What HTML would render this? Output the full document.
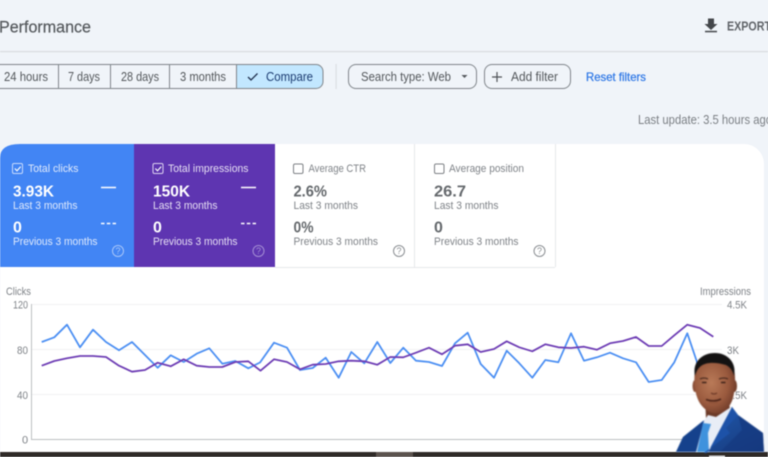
<!DOCTYPE html>
<html><head><meta charset="utf-8"><style>
html,body{margin:0;padding:0;background:#f0f4f9;width:768px;height:457px;overflow:hidden}
svg{display:block;font-family:"Liberation Sans",sans-serif}
</style></head><body>
<svg width="768" height="457" viewBox="0 0 768 457" xmlns="http://www.w3.org/2000/svg">
<defs>
<linearGradient id="jk" x1="0" y1="0" x2="1" y2="1"><stop offset="0" stop-color="#2260b8"/><stop offset="1" stop-color="#16387a"/></linearGradient>
<radialGradient id="fc" cx="0.42" cy="0.42" r="0.68"><stop offset="0" stop-color="#b97a58"/><stop offset=".6" stop-color="#9a5a3e"/><stop offset="1" stop-color="#6a3726"/></radialGradient>
</defs>
<rect width="768" height="457" fill="#f0f4f9"/>
<g style="filter:blur(.45px)">
<text x="-1" y="32.500" font-size="16.500" fill="#54585c" stroke="#54585c" stroke-width=".2" textLength="92" lengthAdjust="spacingAndGlyphs">Performance</text>
<rect x="0" y="51" width="768" height="1.200" fill="#d9dbde"/>
<path d="M708 18.500h6v5.500h3.500l-6.500 6-6.500-6h3.500z" fill="#44474b"/>
<rect x="705" y="30.800" width="12" height="1.500" fill="#44474b"/>
<text x="727" y="30.500" font-size="12.500" font-weight="bold" fill="#5f6368" textLength="44" lengthAdjust="spacingAndGlyphs">EXPORT</text>

<!-- segments -->
<path d="M236.500 64.500H316a7 7 0 0 1 7 7V81.500a7 7 0 0 1-7 7H236.500z" fill="#c2e7ff"/>
<path d="M-10 64.500H316a7 7 0 0 1 7 7V81.500a7 7 0 0 1-7 7H-10z" fill="none" stroke="#80868b" stroke-width="1"/>
<path d="M58.500 64.500v24M110.500 64.500v24M169.500 64.500v24M236.500 64.500v24" stroke="#80868b" stroke-width="1"/>
<g font-size="12.500" fill="#54585c">
<text x="4" y="81" textLength="44" lengthAdjust="spacingAndGlyphs">24 hours</text>
<text x="68" y="81" textLength="32" lengthAdjust="spacingAndGlyphs">7 days</text>
<text x="121" y="81" textLength="38" lengthAdjust="spacingAndGlyphs">28 days</text>
<text x="180" y="81" textLength="46" lengthAdjust="spacingAndGlyphs">3 months</text>
<text x="266" y="81" fill="#1c3c72" textLength="47" lengthAdjust="spacingAndGlyphs">Compare</text>
</g>
<path d="M248 77l3 3 6.500-6.500" fill="none" stroke="#1f2f4d" stroke-width="1.300"/>
<rect x="335.500" y="64" width="1.200" height="25" fill="#dcdfe3"/>
<rect x="348.500" y="64.500" width="128" height="24" rx="7.500" fill="none" stroke="#80868b"/>
<text x="361" y="81" font-size="12.500" fill="#54585c" textLength="90" lengthAdjust="spacingAndGlyphs">Search type: Web</text>
<path d="M461.500 75h6l-3 3z" fill="#54585c"/>
<rect x="484.500" y="64.500" width="86" height="24" rx="7.500" fill="none" stroke="#80868b"/>
<path d="M497 72v10M492 77h10" stroke="#4f5357" stroke-width="1.200"/>
<text x="511" y="81" font-size="12.500" fill="#54585c" textLength="47" lengthAdjust="spacingAndGlyphs">Add filter</text>
<text x="586" y="81" font-size="12" fill="#2f78e6" stroke="#2f78e6" stroke-width=".25" textLength="60" lengthAdjust="spacingAndGlyphs">Reset filters</text>
<text x="638" y="124" font-size="12.500" fill="#7c8085" textLength="134" lengthAdjust="spacingAndGlyphs">Last update: 3.5 hours ago</text>

<!-- card -->
<path d="M0 452V164a20 20 0 0 1 20-20H744a20 20 0 0 1 20 20V452z" fill="#fff"/>
<path d="M0 267V158Q0 144 20 144H134V267z" fill="#4285f4"/>
<rect x="134" y="144" width="141" height="123" fill="#5e35b1"/>
<rect x="275" y="267" width="280" height="1" fill="#e6e8eb"/>
<rect x="414" y="144" width="1" height="123" fill="#e6e8eb"/>
<rect x="555" y="144" width="1" height="123" fill="#e6e8eb"/>

<!-- checks -->
<g fill="none" stroke-width="1">
<rect x="12.500" y="163.500" width="10" height="10" rx="1.500" stroke="#c8dafc"/>
<path d="M14.800 168.500l2.200 2.300 3.700-4.200" stroke="#fff" stroke-width="1.100"/>
<rect x="153" y="163.500" width="10" height="10" rx="1.500" stroke="#ddd2f0"/>
<path d="M155.300 168.500l2.200 2.300 3.700-4.200" stroke="#fff" stroke-width="1.100"/>
<rect x="293.500" y="164" width="9.500" height="9.500" rx="1.500" stroke="#7d8185"/>
<rect x="434.500" y="164" width="9.500" height="9.500" rx="1.500" stroke="#7d8185"/>
</g>
<g font-size="11">
<g fill="#e0eafc">
<text x="28" y="172" textLength="50.500" lengthAdjust="spacingAndGlyphs">Total clicks</text>
<text x="13" y="209" textLength="64.500" lengthAdjust="spacingAndGlyphs">Last 3 months</text>
<text x="13" y="245" textLength="84.500" lengthAdjust="spacingAndGlyphs">Previous 3 months</text>
</g>
<g fill="#e6dff3">
<text x="168" y="172" textLength="80.500" lengthAdjust="spacingAndGlyphs">Total impressions</text>
<text x="153" y="209" textLength="64.500" lengthAdjust="spacingAndGlyphs">Last 3 months</text>
<text x="153" y="245" textLength="84.500" lengthAdjust="spacingAndGlyphs">Previous 3 months</text>
</g>
<g fill="#7f8388">
<text x="308.500" y="172" textLength="57.500" lengthAdjust="spacingAndGlyphs">Average CTR</text>
<text x="293.500" y="209" textLength="64.500" lengthAdjust="spacingAndGlyphs">Last 3 months</text>
<text x="293.500" y="245" textLength="84.500" lengthAdjust="spacingAndGlyphs">Previous 3 months</text>
<text x="449" y="172" textLength="75" lengthAdjust="spacingAndGlyphs">Average position</text>
<text x="434" y="209" textLength="64.500" lengthAdjust="spacingAndGlyphs">Last 3 months</text>
<text x="434" y="245" textLength="84.500" lengthAdjust="spacingAndGlyphs">Previous 3 months</text>
</g>
</g>
<g font-size="16" font-weight="bold">
<g fill="#fff">
<text x="13" y="196.500" textLength="41" lengthAdjust="spacingAndGlyphs">3.93K</text>
<text x="13" y="232.500">0</text>
<text x="153" y="196.500" textLength="37" lengthAdjust="spacingAndGlyphs">150K</text>
<text x="153" y="232.500">0</text>
</g>
<g fill="#65696d">
<text x="293.500" y="196.500" textLength="33.500" lengthAdjust="spacingAndGlyphs">2.6%</text>
<text x="293.500" y="232.500" textLength="20" lengthAdjust="spacingAndGlyphs">0%</text>
<text x="434" y="196.500" textLength="32" lengthAdjust="spacingAndGlyphs">26.7</text>
<text x="434" y="232.500">0</text>
</g>
</g>
<path d="M101 187.500h15M241 187.500h15" stroke="#fff" stroke-width="1.400"/>
<path d="M101 223.500h15M241 223.500h15" stroke="#fff" stroke-width="1.400" stroke-dasharray="3.500 2.300"/>
<g fill="none" stroke-width="1" font-size="9" text-anchor="middle">
<circle cx="118" cy="251" r="5.500" stroke="#a8c6f9"/><text x="118" y="254.200" fill="#a8c6f9" stroke="none">?</text>
<circle cx="258.500" cy="251" r="5.500" stroke="#a48ed4"/><text x="258.500" y="254.200" fill="#a48ed4" stroke="none">?</text>
<circle cx="399" cy="251" r="5.500" stroke="#8b8f93"/><text x="399" y="254.200" fill="#8b8f93" stroke="none">?</text>
<circle cx="539.500" cy="251" r="5.500" stroke="#8b8f93"/><text x="539.500" y="254.200" fill="#8b8f93" stroke="none">?</text>
</g>

<!-- chart -->
<path d="M31 304.500H722M31 349.500H722M31 394.500H722" stroke="#f1f2f3" stroke-width="1"/>
<path d="M31.500 304V439.500H722" fill="none" stroke="#bdbfc2" stroke-width="1"/>
<g font-size="11" fill="#7f8388">
<text x="6" y="295" textLength="25" lengthAdjust="spacingAndGlyphs">Clicks</text>
<text x="13" y="308.500" textLength="15" lengthAdjust="spacingAndGlyphs">120</text>
<text x="17" y="354" textLength="11" lengthAdjust="spacingAndGlyphs">80</text>
<text x="17" y="399" textLength="11" lengthAdjust="spacingAndGlyphs">40</text>
<text x="22" y="443.500">0</text>
<text x="700" y="295" textLength="51" lengthAdjust="spacingAndGlyphs">Impressions</text>
<text x="727" y="308.500" textLength="20" lengthAdjust="spacingAndGlyphs">4.5K</text>
<text x="727" y="354" textLength="12" lengthAdjust="spacingAndGlyphs">3K</text>
<text x="727" y="399" textLength="20" lengthAdjust="spacingAndGlyphs">1.5K</text>
</g>
<polyline fill="none" stroke="#4d90f3" stroke-width="1.800" stroke-linejoin="round" points="41.700,342 54.300,337.300 67,324.700 80,347.300 93,329.700 106,342 119,350.300 132,342 145,355 157.700,367.700 170.700,355.300 183.700,362 196.700,353.700 209.300,348.300 222.300,363.700 235.300,361 248.300,368.300 260,362.500 274,342.700 287,347.700 300,370 312.700,368 325.700,357.700 338.700,377.700 351.300,352 364.300,363.300 377.300,342 390.300,363 403.300,347.700 416,360.700 429,362 442,366 455,343.300 467.700,332.700 480.700,364 494,377.700 506.700,350.700 519.300,363.300 532.300,377.700 545.300,360 558.300,362.300 571,333.300 584,360.700 597,357.300 610,352.700 623,358.300 636,362.300 648.700,382 661.700,380 674.300,362.300 687.300,333.300 697,362 705,380"/>
<polyline fill="none" stroke="#6f3fb5" stroke-width="1.800" stroke-linejoin="round" points="41.700,365.700 54.300,361 67,358.300 80,356 93,356 106,357 119,365.700 132,371.700 145,370 157.700,362.700 170.700,366.300 183.700,359.300 196.700,365.700 209.300,367 222.300,367 235.300,362 248.300,361.300 260.500,370.700 274,359.300 287,362 300,369.300 312.700,364.700 325.700,364 338.700,361.300 351.300,360.700 364.300,361.300 377.300,364.700 390.300,357 403.300,357.300 416,352.700 429,347.700 442,354.300 455,345.700 467.700,344.300 480.700,352 494,349 506.700,341.300 519.300,347.300 532.300,351.300 545.300,344.300 558.300,347.300 571,348 584,346.700 597,349.700 610,343.300 623,341 636,337 648.700,346 661.700,346 674.300,335.300 687.300,324.700 700,328 713.300,336.700"/>

<!-- bottom strip -->
<rect x="0" y="452" width="768" height="5" fill="#2f2a27"/>
<rect x="376" y="452" width="37" height="5" fill="#5b534e"/>
<rect x="709" y="455.500" width="16" height="1.500" fill="#d8d8d8"/>
</g>

<!-- person -->
<g style="filter:blur(.7px)">
<!-- jacket -->
<path d="M676 452 683 437 703 421 732 407 738 415 763 433 764 452z" fill="url(#jk)"/>
<path d="M676 452 683 437 703 421 698 452z" fill="#15418c"/>
<!-- neck -->
<path d="M705 398 706 418 716 424 730 412 729 398z" fill="#6b3a28"/>
<!-- shirt -->
<path d="M704 421 708 415 716 417 731 407 734 411 727 424 708 452H696z" fill="#e8edf6"/>
<!-- tie -->
<path d="M703 423 711 424 708 433 709 452H697L701 433z" fill="#3f92dd"/>
<!-- lapel -->
<path d="M732 407 738 415 726 428 730 433 704 453H706L708 452z" fill="#1d52a8"/>
<path d="M738 415 763 433 764 452H720L742 430z" fill="#153a80" opacity=".75"/>
<!-- ears -->
<ellipse cx="695" cy="386" rx="2.500" ry="6" fill="#8a4e36"/>
<ellipse cx="734.500" cy="386" rx="2.500" ry="6" fill="#74412c"/>
<!-- face -->
<path d="M695 370C693 386 696 399 702 406 708 413 714 414 719 413 726 412 731 405 733 398 735 390 736 380 734 368 729 358 701 358 695 370z" fill="url(#fc)"/>
<!-- hair -->
<path d="M695 376C692 362 702 353 715 353 727 353 737 362 734 376 733 371 730 367 726 365 716 362 706 362 701 366 698 368 696 372 695 376z" fill="#141212"/>
<!-- features -->
<path d="M700 379q4-2 8 0M719 379q5-2 9 0" fill="none" stroke="#3a2018" stroke-width="1.100"/>
<path d="M702 382.500h4.500M721 382.500h4.500" stroke="#2b1610" stroke-width="1.200"/>
<path d="M711 393q3 2 6 0" fill="none" stroke="#6b3826" stroke-width="1.300"/>
<path d="M706 399.500q8 3 15 -.5" fill="none" stroke="#4a2318" stroke-width="1.600"/>
<path d="M709 402.500q5 1.500 9 0" fill="none" stroke="#8f5239" stroke-width="1"/>
</g>
</svg>
</body></html>
